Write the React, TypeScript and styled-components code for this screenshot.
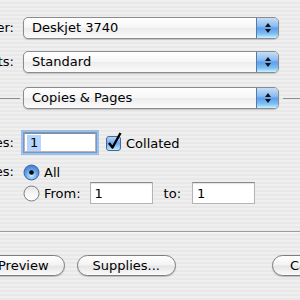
import React from 'react';
import styled, { createGlobalStyle } from 'styled-components';

const GlobalStyle = createGlobalStyle`
  html, body {
    margin: 0;
    padding: 0;
    overflow: hidden;
    width: 300px;
    height: 300px;
  }
  body {
    background: repeating-linear-gradient(#efefef 0 2px, #e8e8e8 2px 4px);
    font-family: "DejaVu Sans", "Liberation Sans", sans-serif;
    font-size: 13px;
    color: #000;
  }
`;

// the dialog is wider than the window; its left labels and right buttons are cut off
const Dialog = styled.div`
  width: 510px;
  margin-left: -66px;
  padding-top: 17px;
  display: flex;
  flex-direction: column;
`;

const FieldRow = styled.div<{ $top?: number; $align?: string }>`
  display: flex;
  align-items: ${(p) => p.$align || 'center'};
  gap: 9px;
  margin-top: ${(p) => p.$top || 0}px;
`;

const Label = styled.div`
  width: 80px;
  flex: none;
  text-align: right;
  line-height: 16px;
`;

const Popup = styled.div`
  display: flex;
  width: 256px;
  height: 22px;
  box-sizing: border-box;
  flex: none;
  border: 1px solid #8b8b8b;
  border-radius: 5px;
  background: linear-gradient(#ffffff, #f6f6f6 48%, #ececec 52%, #fbfbfb);
  box-shadow: 0 1px 1px rgba(0, 0, 0, 0.18);
  overflow: hidden;
`;

const PopupText = styled.span`
  flex: 1;
  padding-left: 8px;
  line-height: 20px;
  white-space: nowrap;
`;

const Stepper = styled.div`
  width: 21px;
  flex: none;
  border-left: 1px solid #5879a8;
  background: linear-gradient(#c4def8, #8dbdf0 40%, #609fe9 52%, #7fc0f4 80%, #c8f2ff);
  display: flex;
  align-items: center;
  justify-content: center;
`;

const SectionHeader = styled.div`
  display: flex;
  align-items: center;
  margin-top: 14px;
`;

const Rule = styled.div<{ $width?: number }>`
  height: 1px;
  background: #8e8e8e;
  flex: ${(p) => (p.$width ? `0 0 ${p.$width}px` : '1')};
  margin: 0 ${(p) => (p.$width ? '3px 0 0' : '0 0 4px')};
`;

const TextField = styled.div<{ $width: number; $focused?: boolean }>`
  width: ${(p) => p.$width}px;
  height: ${(p) => (p.$focused ? 19 : 22)}px;
  box-sizing: border-box;
  flex: none;
  background: #fff;
  border: 1px solid #b4b4b4;
  border-top-color: #8a8a8a;
  box-shadow: ${(p) =>
    p.$focused
      ? '0 0 0 1px #6e9bd6, 0 0 0 3px rgba(120, 165, 225, 0.65)'
      : 'inset 0 1px 1px rgba(0,0,0,0.12)'};
  padding-left: ${(p) => (p.$focused ? 2 : 4)}px;
  display: flex;
  align-items: center;
  margin-left: ${(p) => (p.$focused ? 1 : 0)}px;
`;

const Selected = styled.span`
  background: #b5d5ff;
  padding: 0 3px;
  line-height: 16px;
`;

const CheckLabel = styled.label`
  display: flex;
  align-items: center;
  gap: 4px;
  margin-left: 1px;
  padding-top: 2px;
`;

const RadioGroup = styled.div`
  display: flex;
  flex-direction: column;
  gap: 2px;
`;

const RadioRow = styled.div<{ $height: number }>`
  display: flex;
  align-items: center;
  height: ${(p) => p.$height}px;
  gap: 4px;
`;

const InlineText = styled.span<{ $before?: number; $after?: number }>`
  margin-left: ${(p) => p.$before || 0}px;
  margin-right: ${(p) => p.$after || 0}px;
`;

const Divider = styled.div`
  height: 1px;
  background: #9c9c9c;
  border-bottom: 1px solid #f8f8f8;
  margin-top: 27px;
`;

const ButtonBar = styled.div`
  display: flex;
  gap: 12px;
  padding-left: 48px;
  margin-top: 22px;
`;

const PushButton = styled.button<{ $push?: boolean }>`
  height: 21px;
  padding: 0 15px;
  min-width: 80px;
  border: 1px solid #7d7d7d;
  border-radius: 11px;
  background: linear-gradient(#ffffff, #f3f3f3 48%, #e4e4e4 52%, #fbfbfb);
  box-shadow: 0 1px 1px rgba(0, 0, 0, 0.22);
  font-family: inherit;
  font-size: 13px;
  color: #000;
  line-height: 19px;
  margin-left: ${(p) => (p.$push ? 'auto' : '0')};
`;

const Arrows = () => (
  <svg width="8" height="12" viewBox="0 0 8 12">
    <path d="M4 1 L7 5 L1 5 Z" fill="#111" />
    <path d="M1 7 L7 7 L4 11 Z" fill="#111" />
  </svg>
);

const PopupButton: React.FC<{ children: React.ReactNode }> = ({ children }) => (
  <Popup>
    <PopupText>{children}</PopupText>
    <Stepper>
      <Arrows />
    </Stepper>
  </Popup>
);

const CheckBox = () => (
  <svg width="16" height="19" viewBox="0 0 16 19" style={{ marginTop: -4 }}>
    <defs>
      <linearGradient id="cbg" x1="0" y1="0" x2="0" y2="1">
        <stop offset="0" stopColor="#bcd8f6" />
        <stop offset="0.5" stopColor="#6fa9ec" />
        <stop offset="1" stopColor="#c4f0ff" />
      </linearGradient>
    </defs>
    <rect x="0.5" y="4.5" width="14" height="14" rx="2.5" fill="url(#cbg)" stroke="#45699c" />
    <path d="M3 11 L6.5 15.5 L14.5 1" fill="none" stroke="#000" strokeWidth="2.4" strokeLinejoin="round" />
  </svg>
);

const Radio: React.FC<{ on?: boolean }> = ({ on }) => (
  <svg width="17" height="17" viewBox="0 0 17 17">
    <defs>
      <radialGradient id="ron" cx="0.5" cy="0.7" r="0.6">
        <stop offset="0" stopColor="#c8f2ff" />
        <stop offset="0.6" stopColor="#6aa6ec" />
        <stop offset="1" stopColor="#4a86d8" />
      </radialGradient>
      <linearGradient id="roff" x1="0" y1="0" x2="0" y2="1">
        <stop offset="0" stopColor="#e4e4e4" />
        <stop offset="0.5" stopColor="#f6f6f6" />
        <stop offset="1" stopColor="#ffffff" />
      </linearGradient>
    </defs>
    <circle
      cx="8.5"
      cy="8.5"
      r="7.5"
      fill={on ? 'url(#ron)' : 'url(#roff)'}
      stroke={on ? '#3d63a0' : '#7c7c7c'}
    />
    {on && <circle cx="8.5" cy="8.5" r="2.3" fill="#000" />}
  </svg>
);

export default function App() {
  return (
    <>
      <GlobalStyle />
      <Dialog>
        <FieldRow>
          <Label>Printer:</Label>
          <PopupButton>Deskjet 3740</PopupButton>
        </FieldRow>
        <FieldRow $top={12}>
          <Label>Presets:</Label>
          <PopupButton>Standard</PopupButton>
        </FieldRow>

        <SectionHeader>
          <Rule $width={86} />
          <PopupButton>Copies &amp; Pages</PopupButton>
          <Rule />
        </SectionHeader>

        <FieldRow $top={24}>
          <Label>Copies:</Label>
          <TextField $width={72} $focused>
            <Selected>1</Selected>
          </TextField>
          <CheckLabel>
            <CheckBox />
            Collated
          </CheckLabel>
        </FieldRow>

        <FieldRow $top={12} $align="flex-start">
          <Label>Pages:</Label>
          <RadioGroup>
            <RadioRow $height={16}>
              <Radio on />
              <span>All</span>
            </RadioRow>
            <RadioRow $height={22}>
              <Radio />
              <InlineText $after={5}>From:</InlineText>
              <TextField $width={63}>1</TextField>
              <InlineText $before={7} $after={7}>
                to:
              </InlineText>
              <TextField $width={63}>1</TextField>
            </RadioRow>
          </RadioGroup>
        </FieldRow>

        <Divider />

        <ButtonBar>
          <PushButton>Preview</PushButton>
          <PushButton>Supplies...</PushButton>
          <PushButton $push>Cancel</PushButton>
          <PushButton>Print</PushButton>
        </ButtonBar>
      </Dialog>
    </>
  );
}
